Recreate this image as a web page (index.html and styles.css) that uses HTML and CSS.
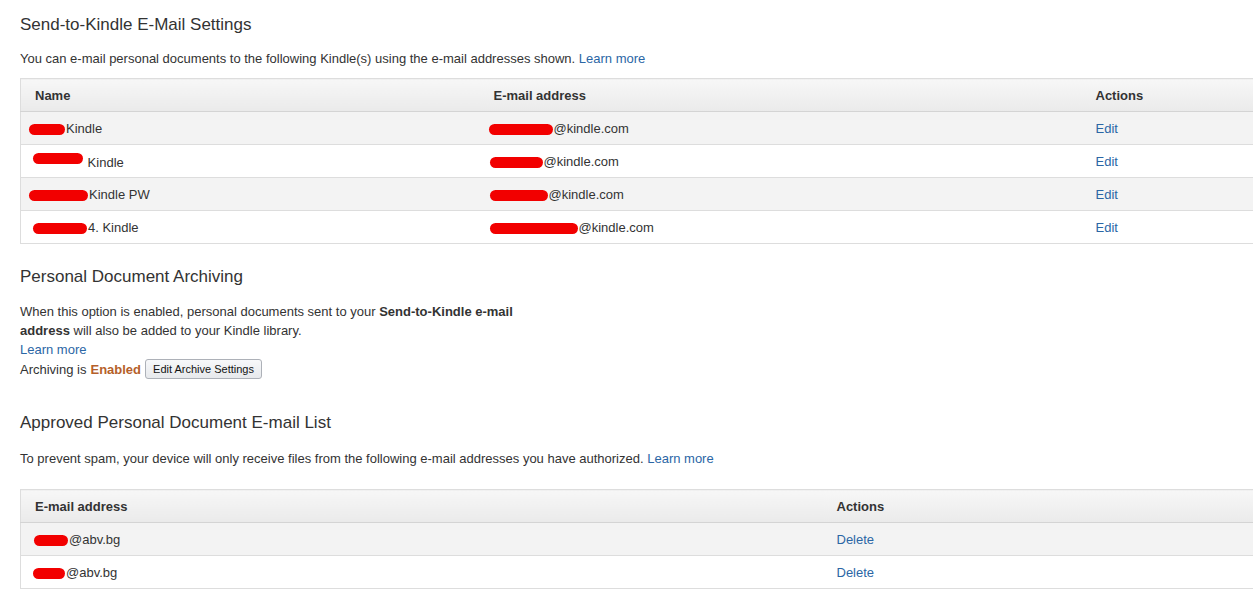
FILE: index.html
```html
<!DOCTYPE html>
<html lang="en">
<head>
  <meta charset="UTF-8">
  <title>Send-to-Kindle E-Mail Settings</title>
  <link rel="stylesheet" href="styles.css">
</head>
<body>
  <div class="page">

    <!-- Send-to-Kindle e-mail -->
    <section class="block">
      <h2>Send-to-Kindle E-Mail Settings</h2>
      <p class="intro">You can e-mail personal documents to the following Kindle(s) using the e-mail addresses shown. <a href="#">Learn more</a></p>

      <table class="grid">
        <colgroup>
          <col style="width: 459px">
          <col style="width: 602px">
          <col>
        </colgroup>
        <thead>
          <tr><th>Name</th><th>E-mail address</th><th>Actions</th></tr>
        </thead>
        <tbody>
          <tr>
            <td><span class="blot" style="width: 36px; margin-left: -6px"></span>Kindle</td>
            <td><span class="blot" style="width: 64px; margin-left: -5px"></span>@kindle.com</td>
            <td><a href="#">Edit</a></td>
          </tr>
          <tr>
            <td><span class="blot up" style="width: 50px; margin-left: -2px"></span>&nbsp;Kindle</td>
            <td><span class="blot" style="width: 53px; margin-left: -4px"></span>@kindle.com</td>
            <td><a href="#">Edit</a></td>
          </tr>
          <tr>
            <td><span class="blot" style="width: 59px; margin-left: -6px"></span>Kindle PW</td>
            <td><span class="blot" style="width: 58px; margin-left: -4px"></span>@kindle.com</td>
            <td><a href="#">Edit</a></td>
          </tr>
          <tr>
            <td><span class="blot" style="width: 54px; margin-left: -2px"></span>4. Kindle</td>
            <td><span class="blot" style="width: 88px; margin-left: -4px"></span>@kindle.com</td>
            <td><a href="#">Edit</a></td>
          </tr>
        </tbody>
      </table>
    </section>

    <!-- Archiving -->
    <section class="block archive">
      <h2>Personal Document Archiving</h2>
      <p class="lines">When this option is enabled, personal documents sent to your <b>Send-to-Kindle e-mail<br>address</b> will also be added to your Kindle library.<br><a href="#">Learn more</a></p>
      <div class="status">
        Archiving is <b class="on">Enabled</b>
        <button type="button">Edit Archive Settings</button>
      </div>
    </section>

    <!-- Approved senders -->
    <section class="block approved">
      <h2>Approved Personal Document E-mail List</h2>
      <p class="intro">To prevent spam, your device will only receive files from the following e-mail addresses you have authorized. <a href="#">Learn more</a></p>

      <table class="grid">
        <colgroup>
          <col style="width: 802px">
          <col>
        </colgroup>
        <thead>
          <tr><th>E-mail address</th><th>Actions</th></tr>
        </thead>
        <tbody>
          <tr>
            <td><span class="blot" style="width: 34px; margin-left: -1px"></span>@abv.bg</td>
            <td><a href="#">Delete</a></td>
          </tr>
          <tr>
            <td><span class="blot" style="width: 32px; margin-left: -2px"></span>@abv.bg</td>
            <td><a href="#">Delete</a></td>
          </tr>
        </tbody>
      </table>
    </section>

  </div>
</body>
</html>
```

FILE: styles.css
```css
* { box-sizing: border-box; }

body {
  margin: 0;
  background: #fff;
  color: #333;
  font-family: Arial, "Liberation Sans", sans-serif;
  font-size: 13px;
  overflow: hidden;
}

a {
  color: #2b66a5;
  text-decoration: none;
}

.page {
  padding: 15px 0 0 20px;
  width: 1270px;
}

.block h2 {
  margin: 0;
  font-size: 17px;
  font-weight: normal;
  line-height: 20px;
  color: #333;
}

.intro {
  margin: 15px 0 10px;
  line-height: 18px;
}

.grid {
  width: 100%;
  border-collapse: collapse;
  table-layout: fixed;
  border-top: 1px solid #ddd;
  border-left: 1px solid #ddd;
}

.grid th {
  height: 33px;
  padding: 0 14px;
  text-align: left;
  font-weight: bold;
  color: #333;
  background: linear-gradient(#f7f7f7, #eaeaea);
  border-bottom: 1px solid #d4d4d4;
}

.grid td {
  height: 33px;
  padding: 0 14px;
  border-bottom: 1px solid #ddd;
  white-space: nowrap;
}

.grid tbody tr:nth-child(odd) td {
  background: #f3f3f3;
}

/* red marker strokes over the names */
.blot {
  display: inline-block;
  height: 11px;
  margin-right: 1px;
  vertical-align: -2px;
  background: #f20000;
  border-radius: 6px;
}

.blot.up {
  vertical-align: 3px;
}

.archive {
  margin-top: 23px;
}

.lines {
  margin: 15px 0 0;
  line-height: 19px;
}

.status {
  display: flex;
  align-items: center;
  gap: 4px;
  height: 20px;
  margin-top: 0;
}

.status .on {
  color: #b5602a;
}

.status button {
  height: 20px;
  padding: 0 7px;
  font-family: Arial, "Liberation Sans", sans-serif;
  font-size: 11px;
  color: #111;
  background: linear-gradient(#f7f8fa, #e7e9ec);
  border: 1px solid #adb1b8;
  border-radius: 3px;
}

.approved {
  margin-top: 34px;
}

.approved .intro {
  margin: 17px 0 21px;
}
```
